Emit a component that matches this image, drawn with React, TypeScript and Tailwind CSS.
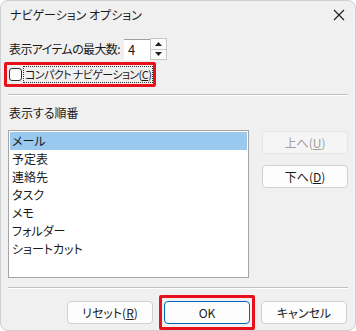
import React, { useState } from 'react';

const items = ['メール', '予定表', '連絡先', 'タスク', 'メモ', 'フォルダー', 'ショートカット'];

const font = "font-['Yu_Gothic_UI','Noto_Sans_CJK_JP',sans-serif] [font-feature-settings:'palt']";

const Btn: React.FC<{ children: React.ReactNode; disabled?: boolean; primary?: boolean }> = ({ children, disabled, primary }) => (
  <div
    className={
      'w-[86px] h-[23px] rounded-[4px] flex items-center justify-center text-[12px] ' +
      (disabled
        ? 'bg-[#f5f5f5] border border-[#e5e5e5] text-[#a0a0a0]'
        : primary
        ? 'bg-[#fdfdfd] border border-[#0067c0] text-[#1a1a1a]'
        : 'bg-[#fdfdfd] border border-[#d0d0d0] text-[#1a1a1a]')
    }
  >
    {children}
  </div>
);

const App: React.FC = () => {
  const [selected, setSelected] = useState(0);
  const [compact, setCompact] = useState(false);

  return (
    <div className={`w-[356px] h-[331px] bg-white ${font}`}>
      <div className="w-full h-full rounded-[8px] border border-[#cfcfcf] bg-[#f0f0f0] flex flex-col text-[#1a1a1a]">
        {/* タイトルバー */}
        <div className="h-[29px] flex items-center justify-between pl-[9px] pr-[9px]">
          <span className="text-[12px]">ナビゲーション オプション</span>
          <svg width="12" height="12" viewBox="0 0 12 12" className="mr-[1px]">
            <path d="M1 1L11 11M11 1L1 11" stroke="#1a1a1a" strokeWidth="1.1" />
          </svg>
        </div>

        <div className="px-[7px] flex flex-col">
          {/* 最大数 */}
          <div className="mt-[9px] h-[22px] flex items-center">
            <span className="text-[12px] ml-[1px] tracking-[-0.6px] whitespace-nowrap">表示アイテムの最大数:</span>
            <div className="ml-[4px] w-[26px] h-[21px] bg-white border-t border-[#a0a0a0] flex items-center pl-[4px] text-[13px]">4</div>
            <div className="w-[17px] h-[22px] flex flex-col border border-[#c8c8c8] bg-[#f0f0f0]">
              <div className="flex-1 flex items-center justify-center border-b border-[#c8c8c8] bg-[#fbfbfb]">
                <svg width="7" height="4" viewBox="0 0 7 4"><path d="M3.5 0L7 4H0Z" fill="#222" /></svg>
              </div>
              <div className="flex-1 flex items-center justify-center bg-[#fbfbfb]">
                <svg width="7" height="4" viewBox="0 0 7 4"><path d="M0 0H7L3.5 4Z" fill="#222" /></svg>
              </div>
            </div>
          </div>

          {/* コンパクト ナビゲーション */}
          <div className="-ml-[4px] mt-[2px] w-[152px] h-[25px] border-[3px] border-[#e8101a] rounded-[2px] flex items-center pl-[2px]">
            <div
              onClick={() => setCompact(!compact)}
              className="shrink-0 w-[13px] h-[13px] rounded-[3px] border border-[#333] bg-[#fdfdfd]"
            />
            <span className="ml-[1px] whitespace-nowrap tracking-[-0.6px] text-[11px] leading-[15px] border border-dotted border-[#333] px-[1px]">
              コンパクト ナビゲーション(<span className="underline">C</span>)
            </span>
          </div>

          <div className="mt-[7px] h-[2px] w-[340px] border-t border-[#c0c0c0] border-b border-b-white" />

          <div className="mt-[10px] text-[12px] ml-[1px] leading-[14px]">表示する順番</div>

          <div className="mt-[10px] flex">
            {/* 一覧 */}
            <div className="w-[242px] h-[148px] bg-white border border-[#a5a5a5] p-[1px]">
              {items.map((it, i) => (
                <div
                  key={it}
                  onClick={() => setSelected(i)}
                  className={'h-[18px] flex items-center pl-[2px] text-[12px] ' + (i === selected ? 'bg-[#99c9ef]' : '')}
                >
                  {it}
                </div>
              ))}
            </div>
            <div className="ml-[13px] mt-[1px] flex flex-col gap-[11px]">
              <Btn disabled>上へ(<span className="underline">U</span>)</Btn>
              <Btn>下へ(<span className="underline">D</span>)</Btn>
            </div>
          </div>

          <div className="mt-[9px] h-[2px] w-[340px] border-t border-[#c0c0c0] border-b border-b-white" />

          {/* ボタン */}
          <div className="mt-[6px] flex items-center justify-end pr-[1px] gap-[6px]">
            <Btn>リセット(<span className="underline">R</span>)</Btn>
            <div className="w-[96px] h-[35px] border-[3px] border-[#e8101a] rounded-[2px] flex items-center justify-center">
              <Btn primary>OK</Btn>
            </div>
            <Btn>キャンセル</Btn>
          </div>
        </div>
      </div>
    </div>
  );
};

export default App;
